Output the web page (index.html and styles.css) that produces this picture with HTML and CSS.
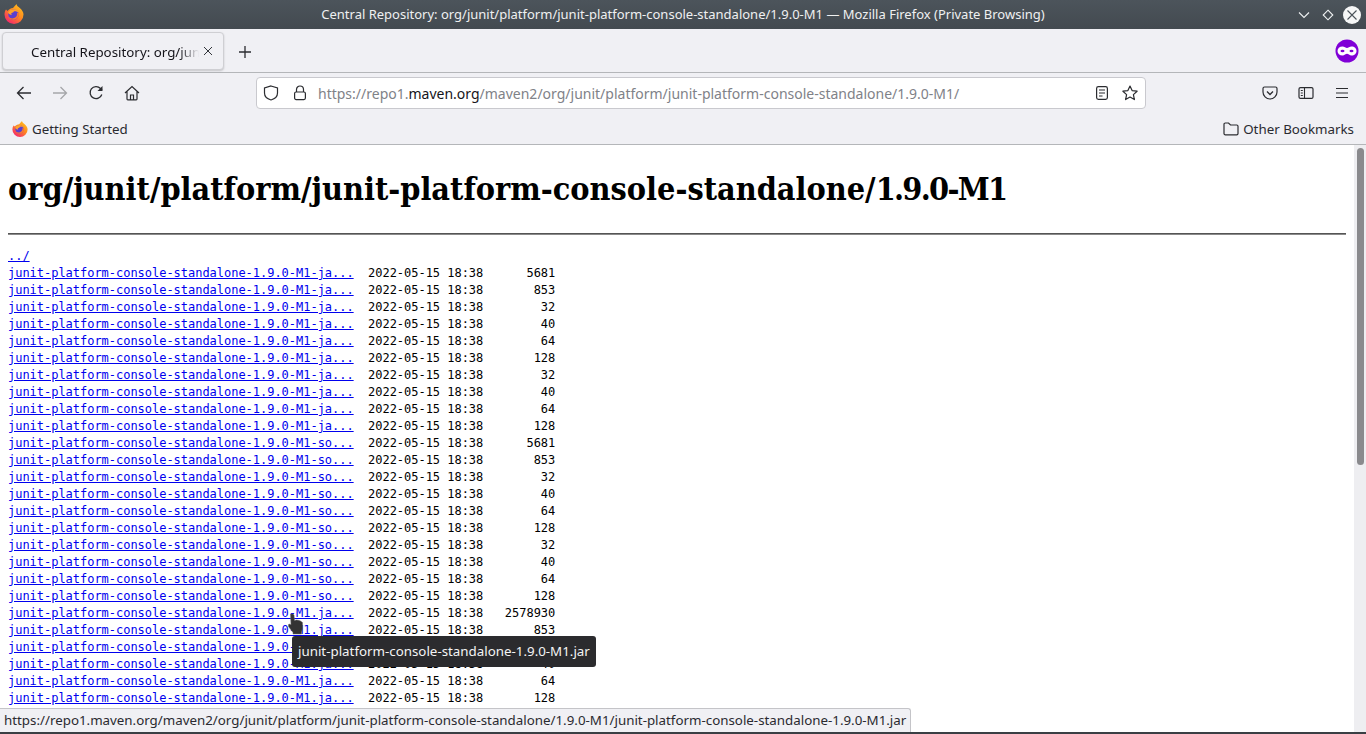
FILE: index.html
```html
<!DOCTYPE html>
<html lang="en">
<head>
    <meta charset="UTF-8">
    <title>Central Repository: org/junit/platform/junit-platform-console-standalone/1.9.0-M1</title>
    <link rel="stylesheet" href="styles.css">
</head>
<body>
<svg class="defs" width="0" height="0">
    <defs>
        <linearGradient id="foxBody" x1="0.85" y1="0.05" x2="0.2" y2="0.95">
            <stop offset="0" stop-color="#ffc01f"/>
            <stop offset="0.45" stop-color="#ff8a1e"/>
            <stop offset="1" stop-color="#f5256e"/>
        </linearGradient>
        <symbol id="fox" viewBox="0 0 20 20">
            <path d="M12.500 0c.2 2 1.800 2.600 3.300 4 2.300 2.100 3.700 4.200 3.700 6.500A9.500 9.500 0 0 1 .5 10.500C.5 8.500 1 6.800 2 5.500l1.500 1.500c1-1.500 3.500-2.800 5.500-3 1-1.500 2.500-2.500 3.500-4z" fill="url(#foxBody)"/>
            <circle cx="9.500" cy="10.500" r="5.200" fill="#5b3fd0"/>
            <path d="M4 8.500c1.200-2.800 4.800-4 7.500-3 1.500.6 2.800 1.800 3.200 3.300-1.200-1.300-3-1.800-4.700-1.500-.3 1-1.500 1.500-2.500 1.700-.5.700-.2 1.500.5 2-1.800-.2-3.300-1-4-2.500z" fill="#ffa22c"/>
            <path d="M14.800 9c.7 3-1.300 6.300-5 6.700-2.200.2-4.300-.8-5.300-2.700 1.500 1.300 3.700 1.800 5.600 1 2.300-.9 3.500-3 3-5.300z" fill="#ff7a2a"/>
        </symbol>
    </defs>
</svg>
<div class="window">
    <div class="titlebar">
        <svg class="app-logo" width="20" height="20"><use href="#fox"/></svg>
        <div class="title-text">Central Repository: org/junit/platform/junit-platform-console-standalone/1.9.0-M1 — Mozilla Firefox (Private Browsing)</div>
        <div class="win-btns">
            <svg class="win-min" width="14" height="14" viewBox="0 0 14 14"><path d="M2 4.500l5 5 5-5" fill="none" stroke="#f0f2f3" stroke-width="1.100"/></svg>
            <svg width="14" height="14" viewBox="0 0 14 14"><path d="M7 2.200l4.800 4.800L7 11.800 2.200 7z" fill="none" stroke="#f0f2f3" stroke-width="1.100"/></svg>
            <svg width="18" height="18" viewBox="0 0 18 18"><circle cx="9" cy="9" r="9" fill="#f6f7f7"/><path d="M4.500 4.500l9 9M13.500 4.500l-9 9" stroke="#4b5359" stroke-width="1.100"/></svg>
        </div>
    </div>

    <div class="tabbar">
        <div class="tab">
            <span class="tab-title">Central Repository: org/junit/platform/junit-platform</span>
            <svg class="tab-close" width="10" height="10" viewBox="0 0 10 10"><path d="M1 1l8 8M9 1l-8 8" stroke="#33363b" stroke-width="1"/></svg>
        </div>
        <svg class="new-tab" width="14" height="14" viewBox="0 0 14 14"><path d="M7 1v12M1 7h12" stroke="#2b2c30" stroke-width="1.300"/></svg>
        <svg class="private-badge" width="24" height="24" viewBox="0 0 24 24">
            <circle cx="12" cy="12" r="11.500" fill="#8000d7"/>
            <path d="M7.500 7.500c2 0 3.200 1.500 4.500 1.500s2.500-1.500 4.500-1.500c3 0 5 2 5 4.500s-2 4.500-5 4.500c-2 0-3.200-1.700-4.500-1.700s-2.500 1.700-4.500 1.700c-3 0-5-2-5-4.500s2-4.500 5-4.500z" fill="#fff"/>
            <ellipse cx="7.500" cy="12" rx="2" ry="1.200" fill="#8000d7"/>
            <ellipse cx="16.500" cy="12" rx="2" ry="1.200" fill="#8000d7"/>
        </svg>
    </div>

    <div class="navbar">
        <div class="nav-left">
            <svg width="16" height="16" viewBox="0 0 16 16"><path d="M15 8H1.500M7.500 2l-6 6 6 6" fill="none" stroke="#2b2c30" stroke-width="1.300"/></svg>
            <svg width="16" height="16" viewBox="0 0 16 16"><path d="M1 8h13.500M8.500 2l6 6-6 6" fill="none" stroke="#a5a6a9" stroke-width="1.300"/></svg>
            <svg width="16" height="16" viewBox="0 0 16 16"><path d="M13.800 9.500A6 6 0 1 1 12.500 3.500L14 5" fill="none" stroke="#2b2c30" stroke-width="1.300"/><path d="M14.500 1v5h-5z" fill="#2b2c30"/></svg>
            <svg width="16" height="16" viewBox="0 0 16 16"><path d="M1 8l7-6.500L15 8M3 6.500V14a.8.8 0 0 0 .8.8h8.400a.8.8 0 0 0 .8-.8V6.500M6.500 14.500V10h3v4.500" fill="none" stroke="#2b2c30" stroke-width="1.200"/></svg>
        </div>
        <div class="urlbar">
            <svg class="url-shield" width="16" height="16" viewBox="0 0 16 16"><path d="M8 1l6.500 2v5c0 3.500-3 6-6.500 7C4.500 14 1.500 11.500 1.500 8V3z" fill="none" stroke="#2b2c30" stroke-width="1.200"/></svg>
            <svg class="url-lock" width="14" height="16" viewBox="0 0 14 16"><path d="M3.500 7V4.500a3.500 3.500 0 0 1 7 0V7" fill="none" stroke="#2b2c30" stroke-width="1.200"/><rect x="1.600" y="7" width="10.800" height="7.600" rx="1.500" fill="none" stroke="#2b2c30" stroke-width="1.200"/></svg>
            <span class="url-text">https://repo1.<b>maven.org</b>/maven2/org/junit/platform/junit-platform-console-standalone/1.9.0-M1/</span>
            <svg class="url-reader" width="14" height="16" viewBox="0 0 14 16"><rect x="1.600" y="1.600" width="10.800" height="12.800" rx="1.800" fill="none" stroke="#2b2c30" stroke-width="1.200"/><path d="M4 5h6M4 8h6M4 11h3.500" stroke="#2b2c30" stroke-width="1.100"/></svg>
            <svg class="url-star" width="16" height="16" viewBox="0 0 16 16"><path d="M8 1l2.100 4.600 5 .6-3.700 3.400 1 5L8 12.100 3.600 14.600l1-5L.9 6.200l5-.6z" fill="none" stroke="#2b2c30" stroke-width="1.200" stroke-linejoin="round"/></svg>
        </div>
        <div class="nav-right">
            <svg width="16" height="16" viewBox="0 0 16 16"><path d="M2.500 2h11A1.500 1.500 0 0 1 15 3.500V7a7 7 0 0 1-14 0V3.500A1.500 1.500 0 0 1 2.500 2z" fill="none" stroke="#2b2c30" stroke-width="1.200"/><path d="M5 6.500L8 9.500l3-3" fill="none" stroke="#2b2c30" stroke-width="1.300"/></svg>
            <svg width="16" height="16" viewBox="0 0 16 16"><rect x="1" y="2.600" width="14" height="10.800" rx="1.500" fill="none" stroke="#2b2c30" stroke-width="1.200"/><path d="M6.500 2.600v10.800M2.800 5.500h2M2.800 8h2M2.800 10.500h2" stroke="#2b2c30" stroke-width="1.100"/></svg>
            <svg width="16" height="16" viewBox="0 0 16 16"><path d="M2 3.500h12M2 8h12M2 12.500h12" stroke="#2b2c30" stroke-width="1.200"/></svg>
        </div>
    </div>

    <div class="bookmarks">
        <div class="bookmark">
            <svg width="16" height="16"><use href="#fox"/></svg>
            <span>Getting Started</span>
        </div>
        <div class="bookmark">
            <svg width="16" height="16" viewBox="0 0 16 16"><path d="M1 12.500V3.300A1.300 1.300 0 0 1 2.300 2h3.200L7.500 4h6.200A1.300 1.300 0 0 1 15 5.300v7.200a1.300 1.300 0 0 1-1.300 1.300H2.300A1.300 1.300 0 0 1 1 12.500z" fill="none" stroke="#2b2c30" stroke-width="1.200"/></svg>
            <span>Other Bookmarks</span>
        </div>
    </div>

    <div class="viewport">
        <div class="page">
            <h1>org/junit/platform/junit-platform-console-standalone/<span class="version">1.9.0-M1</span></h1>
            <hr>
<pre id="listing"><a href="#">../</a>
<a href="#">junit-platform-console-standalone-1.9.0-M1-ja...</a>  2022-05-15 18:38      5681
<a href="#">junit-platform-console-standalone-1.9.0-M1-ja...</a>  2022-05-15 18:38       853
<a href="#">junit-platform-console-standalone-1.9.0-M1-ja...</a>  2022-05-15 18:38        32
<a href="#">junit-platform-console-standalone-1.9.0-M1-ja...</a>  2022-05-15 18:38        40
<a href="#">junit-platform-console-standalone-1.9.0-M1-ja...</a>  2022-05-15 18:38        64
<a href="#">junit-platform-console-standalone-1.9.0-M1-ja...</a>  2022-05-15 18:38       128
<a href="#">junit-platform-console-standalone-1.9.0-M1-ja...</a>  2022-05-15 18:38        32
<a href="#">junit-platform-console-standalone-1.9.0-M1-ja...</a>  2022-05-15 18:38        40
<a href="#">junit-platform-console-standalone-1.9.0-M1-ja...</a>  2022-05-15 18:38        64
<a href="#">junit-platform-console-standalone-1.9.0-M1-ja...</a>  2022-05-15 18:38       128
<a href="#">junit-platform-console-standalone-1.9.0-M1-so...</a>  2022-05-15 18:38      5681
<a href="#">junit-platform-console-standalone-1.9.0-M1-so...</a>  2022-05-15 18:38       853
<a href="#">junit-platform-console-standalone-1.9.0-M1-so...</a>  2022-05-15 18:38        32
<a href="#">junit-platform-console-standalone-1.9.0-M1-so...</a>  2022-05-15 18:38        40
<a href="#">junit-platform-console-standalone-1.9.0-M1-so...</a>  2022-05-15 18:38        64
<a href="#">junit-platform-console-standalone-1.9.0-M1-so...</a>  2022-05-15 18:38       128
<a href="#">junit-platform-console-standalone-1.9.0-M1-so...</a>  2022-05-15 18:38        32
<a href="#">junit-platform-console-standalone-1.9.0-M1-so...</a>  2022-05-15 18:38        40
<a href="#">junit-platform-console-standalone-1.9.0-M1-so...</a>  2022-05-15 18:38        64
<a href="#">junit-platform-console-standalone-1.9.0-M1-so...</a>  2022-05-15 18:38       128
<a href="#">junit-platform-console-standalone-1.9.0-M1.ja...</a>  2022-05-15 18:38   2578930
<a href="#">junit-platform-console-standalone-1.9.0-M1.ja...</a>  2022-05-15 18:38       853
<a href="#">junit-platform-console-standalone-1.9.0-M1.ja...</a>  2022-05-15 18:38        32
<a href="#">junit-platform-console-standalone-1.9.0-M1.ja...</a>  2022-05-15 18:38        40
<a href="#">junit-platform-console-standalone-1.9.0-M1.ja...</a>  2022-05-15 18:38        64
<a href="#">junit-platform-console-standalone-1.9.0-M1.ja...</a>  2022-05-15 18:38       128
</pre>
        </div>
        <div class="scrollbar"><div class="scroll-thumb"></div></div>
        <svg class="cursor" width="16" height="22" viewBox="0 0 16 22"><path d="M2.500 1h2.500l1 1 .5 5.500 2-.5 2 .3 2 .7 2 1.500v6l-1 4V21H5v-1.500L.5 13.500V11.500l1.500-.5 1 1z" fill="#333" stroke="#666" stroke-width=".5"/></svg>
        <div class="tooltip">junit-platform-console-standalone-1.9.0-M1.jar</div>
        <div class="status">https://repo1.maven.org/maven2/org/junit/platform/junit-platform-console-standalone/1.9.0-M1/junit-platform-console-standalone-1.9.0-M1.jar</div>
    </div>
    <div class="bottom-edge"></div>
</div>
</body>
</html>
```

FILE: styles.css
```css
* {
    box-sizing: border-box;
}
html, body {
    margin: 0;
    height: 100%;
    overflow: hidden;
}
body {
    font-family: "Noto Sans", sans-serif;
    color: #15141a;
}
.defs {
    position: absolute;
}
.window {
    display: flex;
    flex-direction: column;
    height: 734px;
    background-color: #f0f0f4;
}
.titlebar {
    height: 29px;
    display: grid;
    grid-template-columns: 1fr auto 1fr;
    align-items: center;
    background: linear-gradient(#4c545b, #434a50);
    color: #eff0f1;
    font-size: 13px;
}
.app-logo {
    margin: -1px 0 0 4px;
}
.title-text {
    padding-bottom: 2px;
    white-space: nowrap;
}
.win-btns {
    display: flex;
    align-items: center;
    justify-content: flex-end;
    gap: 10px;
    padding-right: 5px;
}
.win-btns svg:last-child {
    margin-left: -2px;
}
.tabbar {
    height: 44px;
    display: flex;
    align-items: center;
    padding-left: 2px;
    border-bottom: 1px solid #b4b6b9;
}
.tab {
    width: 222px;
    height: 38px;
    display: flex;
    align-items: center;
    padding-left: 28px;
    background-color: #f0f0f4;
    border: 1px solid #cfcfd3;
    border-radius: 4px;
    box-shadow: 0 1px 2px rgba(0, 0, 0, 0.18);
    font-size: 13.33px;
}
.tab-title {
    width: 172px;
    padding-top: 2px;
    overflow: hidden;
    white-space: nowrap;
    -webkit-mask-image: linear-gradient(to right, #000 148px, transparent 168px);
    mask-image: linear-gradient(to right, #000 148px, transparent 168px);
}
.tab-close {
    margin-top: 0;
}
.new-tab {
    margin: 2px 0 0 14px;
}
.private-badge {
    margin: 1px 7px 0 auto;
}
.navbar {
    height: 40px;
    display: flex;
    align-items: center;
}
.nav-left {
    display: flex;
    align-items: center;
    gap: 20px;
    padding-left: 16px;
    width: 256px;
}
.urlbar {
    width: 890px;
    height: 32px;
    display: flex;
    align-items: center;
    background-color: #fff;
    border: 1px solid #c9c9ce;
    border-radius: 4px;
    font-size: 14px;
    color: #7f8288;
}
.url-shield {
    margin-left: 6px;
}
.url-lock {
    margin-left: 14px;
}
.url-text {
    margin-left: 11px;
    flex: 1;
    white-space: nowrap;
}
.url-text b {
    font-weight: normal;
    color: #15141a;
}
.url-reader {
    margin-right: 13px;
}
.url-star {
    margin-right: 7px;
}
.nav-right {
    flex: 1;
    display: flex;
    align-items: center;
    justify-content: flex-end;
    gap: 20px;
    padding-right: 16px;
}
.bookmarks {
    height: 32px;
    display: flex;
    align-items: center;
    justify-content: space-between;
    padding: 0 12px;
    font-size: 13.33px;
    color: #2a2a30;
    border-bottom: 1px solid #b4b6b9;
}
.bookmark {
    display: flex;
    align-items: center;
    gap: 4px;
}
.viewport {
    flex: 1;
    position: relative;
    overflow: hidden;
    background-color: #fff;
}
.page {
    padding: 8px 20px 0 8px;
    color: #000;
}
h1 {
    font-family: "DejaVu Serif Condensed", "DejaVu Serif", serif;
    font-size: 32.09px;
    font-weight: bold;
    line-height: 43px;
    margin: 15px 0 22px;
    white-space: nowrap;
}
.version {
    letter-spacing: -1.7px;
}
hr {
    margin: 0 0 13px;
    height: 2px;
    border: none;
    border-top: 1px solid #555;
    border-bottom: 1px solid #8a8a8a;
}
pre {
    font-family: "DejaVu Sans Mono", monospace;
    font-size: 12px;
    line-height: 17px;
    letter-spacing: -0.024px;
    margin: 0;
}
a {
    color: #0000ee;
}
.scrollbar {
    position: absolute;
    top: 0;
    right: 0;
    bottom: 0;
    width: 12px;
    background-color: #eeeef1;
}
.scroll-thumb {
    margin: 3px 0 0 3px;
    width: 7px;
    height: 317px;
    border-radius: 4px;
    background-color: #8a8a8d;
}
.cursor {
    position: absolute;
    left: 288px;
    top: 468px;
}
.tooltip {
    position: absolute;
    left: 292px;
    top: 491px;
    height: 31px;
    padding: 0 6px 2px;
    display: flex;
    align-items: center;
    background-color: #2b2b2e;
    color: #f4f4f4;
    border-radius: 3px;
    font-size: 13.33px;
    white-space: nowrap;
}
.status {
    position: absolute;
    left: 0;
    bottom: 2px;
    height: 24px;
    width: 911px;
    padding: 0 4px 2px;
    display: flex;
    align-items: center;
    background-color: #f0f0f4;
    border: 1px solid #c4c4c8;
    border-left: none;
    border-bottom: none;
    border-top-right-radius: 3px;
    color: #2a2a30;
    font-size: 13.33px;
    white-space: nowrap;
}
.bottom-edge {
    position: absolute;
    left: 0;
    right: 0;
    bottom: 0;
    height: 2px;
    background-color: #3a3f44;
}
```
